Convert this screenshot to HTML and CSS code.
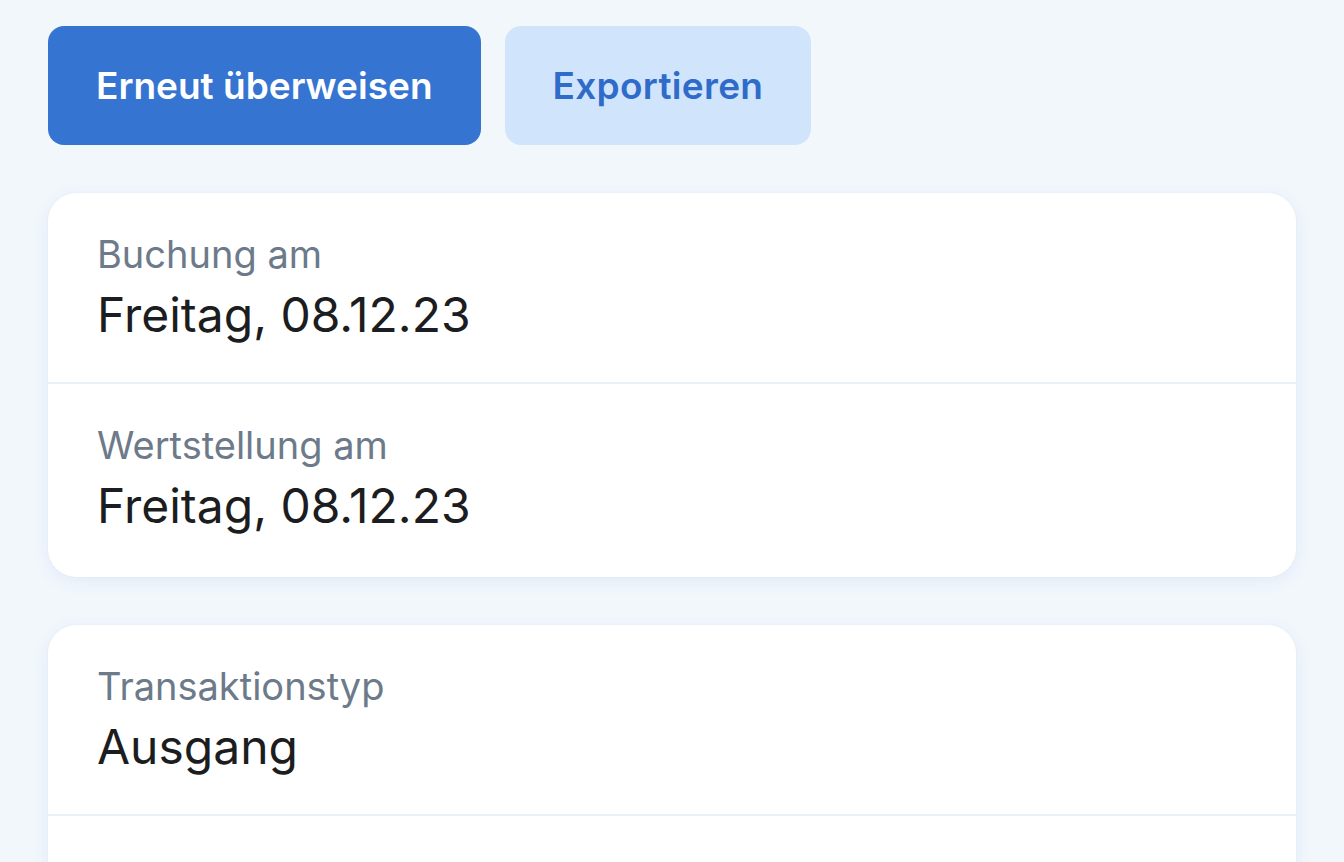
FILE: index.html
```html
<!DOCTYPE html>
<html lang="de">
<head>
<meta charset="utf-8">
<title>Transaktion</title>
<link rel="stylesheet" href="styles.css">
</head>
<body>
<main class="page">
  <div class="actions">
    <button class="btn btn-primary">Erneut überweisen</button>
    <button class="btn btn-secondary">Exportieren</button>
  </div>
  <section class="card">
    <div class="row">
      <div class="label">Buchung am</div>
      <div class="value">Freitag, 08.12.23</div>
    </div>
    <div class="row">
      <div class="label">Wertstellung am</div>
      <div class="value">Freitag, 08.12.23</div>
    </div>
  </section>
  <section class="card">
    <div class="row">
      <div class="label">Transaktionstyp</div>
      <div class="value">Ausgang</div>
    </div>
    <div class="row"></div>
  </section>
</main>
</body>
</html>
```
FILE: styles.css
```css
html, body {
  margin: 0;
  padding: 0;
  background: #f2f7fc;
  height: 100%;
  overflow: hidden;
}
body {
  font-family: "Inter", "Noto Sans", sans-serif;
  color: #1b1d20;
}
.page {
  padding: 26px 48px 0 48px;
  display: flex;
  flex-direction: column;
  gap: 48px;
}
.actions {
  display: flex;
  gap: 24px;
}
.btn {
  height: 119px;
  padding: 0 48px;
  border: none;
  border-radius: 16px;
  font-family: inherit;
  font-size: 37px;
  font-weight: 600;
  cursor: pointer;
}
.btn-primary {
  background: #3574d1;
  color: #ffffff;
}
.btn-secondary {
  background: #d0e5fb;
  color: #2f6bc8;
  letter-spacing: 0.3px;
}
.card {
  background: #ffffff;
  border-radius: 28px;
  box-shadow: 0 4px 18px rgba(40, 90, 170, 0.08), 0 0 2px rgba(40, 90, 170, 0.06);
  overflow: hidden;
  padding-bottom: 2px;
}
.row {
  height: 189px;
  padding: 36px 49px 0 49px;
  box-sizing: border-box;
  display: flex;
  flex-direction: column;
}
.row + .row {
  height: 193px;
  border-top: 2px solid #e9f0f8;
}
.label {
  font-size: 38px;
  line-height: 50px;
  color: #6c7a89;
}
.value {
  font-size: 48px;
  line-height: 72px;
  color: #1b1d20;
}
```
